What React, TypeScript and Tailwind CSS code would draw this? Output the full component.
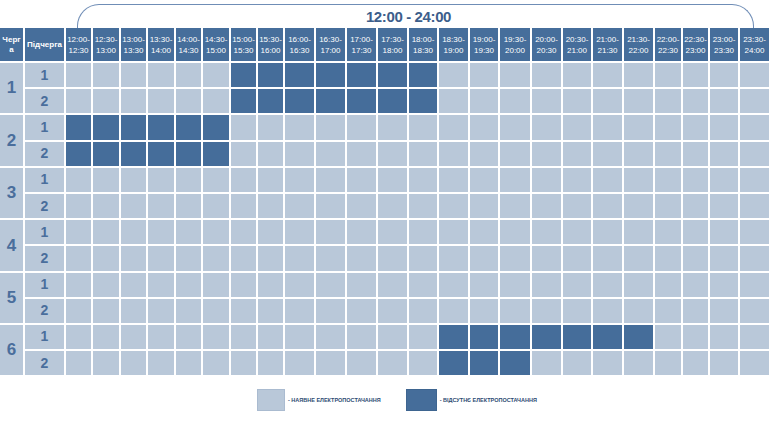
import React from "react";

const slots = [
  "12:00", "12:30", "13:00", "13:30", "14:00", "14:30", "15:00", "15:30",
  "16:00", "16:30", "17:00", "17:30", "18:00", "18:30", "19:00", "19:30",
  "20:00", "20:30", "21:00", "21:30", "22:00", "22:30", "23:00", "23:30", "24:00",
];

// indices of slots without power, per queue / sub-queue
const outages: Record<string, number[]> = {
  "1-1": [6, 7, 8, 9, 10, 11, 12],
  "1-2": [6, 7, 8, 9, 10, 11, 12],
  "2-1": [0, 1, 2, 3, 4, 5],
  "2-2": [0, 1, 2, 3, 4, 5],
  "6-1": [13, 14, 15, 16, 17, 18, 19],
  "6-2": [13, 14, 15],
};

const queues = [1, 2, 3, 4, 5, 6];

const App: React.FC = () => {
  return (
    <div className="w-[774px] h-[428px] bg-white font-['Liberation_Sans',Arial,sans-serif]">
      {/* Bracket with title */}
      <div className="pt-[4px] pl-[77px]">
        <div className="w-[677px] h-[24px] border-t-[1.5px] border-x-[1.5px] border-[#6f8db6] rounded-t-[22px] flex justify-center pt-[4px] pr-[14px]">
          <span className="text-[15px] leading-[15px] font-bold text-[#3c5e8b] tracking-tight">
            12:00 - 24:00
          </span>
        </div>
      </div>

      {/* Schedule grid */}
      <div className="grid gap-[2px] grid-cols-[23px_39px_25px_26px_25px_26px_25px_26px_25px_25px_29px_29px_29px_29px_28px_29px_28px_30px_29px_28px_29px_29px_26px_25px_28px_29px] grid-rows-[33px_repeat(12,24.2px)] w-[769px]">
        {/* Header */}
        <div className="bg-[#466e9b] text-white text-[8px] leading-[10px] font-bold flex items-center justify-center text-center">
          Черг<br />а
        </div>
        <div className="bg-[#466e9b] text-white text-[8px] font-bold flex items-center justify-center">
          Підчерга
        </div>
        {slots.slice(0, 24).map((s, i) => (
          <div
            key={s}
            className="bg-[#466e9b] text-white text-[8px] leading-[11px] flex flex-col items-center justify-center"
          >
            <span>{s}-</span>
            <span>{slots[i + 1]}</span>
          </div>
        ))}

        {/* Rows */}
        {queues.map((q) => (
          <React.Fragment key={q}>
            <div className="row-span-2 bg-[#b9c8d9] flex items-center justify-center text-[17px] font-bold text-[#4a6e9c]">
              {q}
            </div>
            {[1, 2].map((sub) => (
              <React.Fragment key={sub}>
                <div
                  className={
                    sub === 2
                      ? "col-start-2 bg-[#b9c8d9] flex items-center justify-center text-[14px] font-bold text-[#4a6e9c]"
                      : "bg-[#b9c8d9] flex items-center justify-center text-[14px] font-bold text-[#4a6e9c]"
                  }
                >
                  {sub}
                </div>
                {slots.slice(0, 24).map((s, i) => {
                  const off = (outages[`${q}-${sub}`] || []).includes(i);
                  return (
                    <div
                      key={s}
                      className={off ? "bg-[#456d9a]" : "bg-[#b9c8d9]"}
                    />
                  );
                })}
              </React.Fragment>
            ))}
          </React.Fragment>
        ))}
      </div>

      {/* Legend */}
      <div className="flex items-center mt-[14px] ml-[257px]">
        <div className="w-[28px] h-[22px] bg-[#b9c8d9] border border-[#aabbd0]" />
        <span className="ml-[3px] text-[5.5px] font-bold text-[#2c4a72]">
          - НАЯВНЕ ЕЛЕКТРОПОСТАЧАННЯ
        </span>
        <div className="ml-[25px] w-[31px] h-[22px] bg-[#456d9a] border border-[#3e6590]" />
        <span className="ml-[3px] text-[5.5px] font-bold text-[#2c4a72]">
          - ВІДСУТНЄ ЕЛЕКТРОПОСТАЧАННЯ
        </span>
      </div>
    </div>
  );
};

export default App;
